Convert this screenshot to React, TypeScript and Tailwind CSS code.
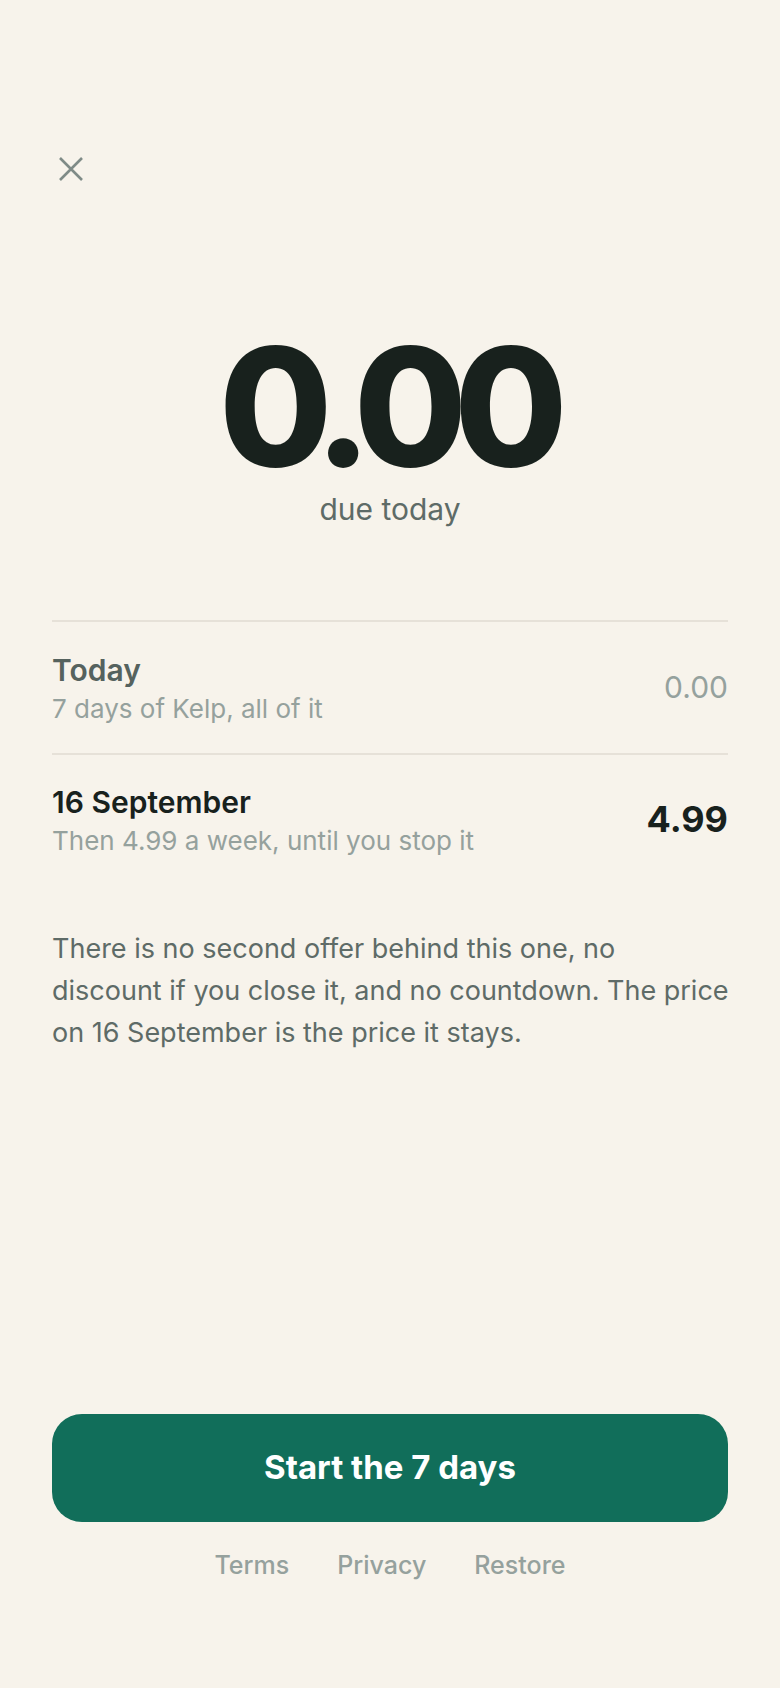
import React from "react";

export default function App() {
  return (
    <div
      className="min-h-screen w-full bg-[#f7f3eb] flex flex-col px-[52px]"
      style={{ fontFamily: "Inter, 'Noto Sans', sans-serif" }}
    >
      <div className="pt-[156px]">
        <button className="block w-[26px] h-[26px] ml-[6px]" aria-label="Close">
          <svg width="26" height="26" viewBox="0 0 26 26" fill="none">
            <path d="M2 2L24 24M24 2L2 24" stroke="#7f8b87" strokeWidth="2.6" strokeLinecap="butt" />
          </svg>
        </button>
      </div>

      <div className="mt-[143px] flex flex-col items-center">
        <div className="text-[164px] leading-[164px] font-extrabold tracking-[-0.08em] text-[#18211d] pr-[0.04em]">
          0.00
        </div>
        <div className="mt-[2px] text-[30px] leading-[36px] text-[#5e6b67]">due today</div>
      </div>

      <div className="mt-[93px] border-t-2 border-[#e6e1d8]">
        <div className="flex items-center justify-between pt-[30px] pb-[26px]">
          <div className="flex flex-col">
            <div className="text-[30px] leading-[36px] font-semibold text-[#55625e]">Today</div>
            <div className="mt-[3px] text-[26px] leading-[36px] text-[#95a19d]">7 days of Kelp, all of it</div>
          </div>
          <div className="mb-[5px] text-[30px] leading-[36px] text-[#95a19d]">0.00</div>
        </div>
      </div>

      <div className="border-t-2 border-[#e6e1d8]">
        <div className="flex items-center justify-between pt-[29px]">
          <div className="flex flex-col">
            <div className="text-[30px] leading-[36px] font-semibold text-[#18211d]">16 September</div>
            <div className="mt-[3px] text-[26px] leading-[36px] text-[#95a19d]">
              Then 4.99 a week, until you stop it
            </div>
          </div>
          <div className="mb-[5px] text-[36px] leading-[40px] font-bold text-[#18211d]">4.99</div>
        </div>
      </div>

      <div className="mt-[69px] flex flex-col text-[27px] leading-[42px] text-[#5e6b67] whitespace-nowrap">
        <span>There is no second offer behind this one, no</span>
        <span>discount if you close it, and no countdown. The price</span>
        <span>on 16 September is the price it stays.</span>
      </div>

      <div className="flex-1" />

      <button className="w-full h-[108px] rounded-[30px] bg-[#116e5a] text-white text-[33px] font-bold">
        Start the 7 days
      </button>

      <div className="mt-[27px] mb-[107px] flex justify-center gap-[48px] text-[25px] leading-[32px] font-medium text-[#95a19d]">
        <span>Terms</span>
        <span>Privacy</span>
        <span>Restore</span>
      </div>
    </div>
  );
}
